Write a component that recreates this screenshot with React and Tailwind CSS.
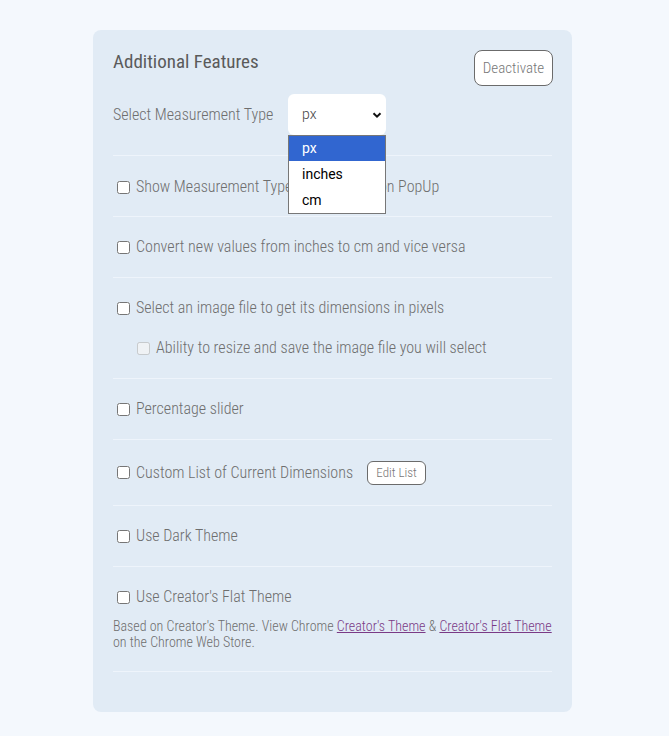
import React from "react";

function Check({ label, disabled = false, indent = false, children }) {
  return (
    <div className={"flex items-center h-5 " + (indent ? "pl-5" : "")}>
      <input
        type="checkbox"
        disabled={disabled}
        className="w-[13px] h-[13px] ml-1 mr-[6px] shrink-0"
      />
      <span className="text-[16px] leading-5 text-[#6e6e6e]">{label}</span>
      {children}
    </div>
  );
}

export default function App() {
  return (
    <div
      className="min-h-[736px] bg-[#f4f8fd] pt-[30px] pb-6 font-light font-stretch-condensed"
      style={{ fontFamily: "Roboto, 'Liberation Sans', sans-serif" }}
    >
      <div className="ml-[93px] w-[479px] rounded-lg bg-[#e1ebf5] px-5 pt-5 pb-10">
        <div className="flex items-start justify-between">
          <h2 className="text-[19px] leading-[22px] font-normal text-[#5a5a5a] mt-px">
            Additional Features
          </h2>
          <button className="h-9 w-[79px] -mr-px rounded-lg border border-[#6b6b6b] bg-white text-[15px] text-[#777]">
            Deactivate
          </button>
        </div>

        <div className="flex items-center mt-2 mb-5">
          <span className="text-[16px] text-[#6e6e6e] w-[175px]">Select Measurement Type</span>
          <div className="relative font-stretch-normal">
            <div className="w-[98px] h-[41px] rounded-md bg-white flex items-center justify-between pl-[14px] pr-[4px]">
              <span className="text-[14px] text-[#444]">px</span>
              <svg width="10" height="10" viewBox="0 0 10 10">
                <path d="M1.5 3.2 L5 6.7 L8.5 3.2" fill="none" stroke="#111" strokeWidth="2" />
              </svg>
            </div>
            <div className="absolute left-0 top-[41px] w-[98px] bg-white border border-[#777] z-10 font-normal text-[14px] text-black">
              <div className="h-[25px] bg-[#3166d0] text-white pl-[13px] flex items-center">px</div>
              <div className="h-[27px] pl-[13px] flex items-center">inches</div>
              <div className="h-[25px] pl-[13px] flex items-center">cm</div>
            </div>
          </div>
        </div>

        <div className="border-t border-[#eef4fb] pt-[21px] pb-[19px]">
          <Check label="Show Measurement Type in the Extension PopUp" />
        </div>
        <div className="border-t border-[#eef4fb] py-5">
          <Check label="Convert new values from inches to cm and vice versa" />
        </div>
        <div className="border-t border-[#eef4fb] py-5 flex flex-col gap-5">
          <Check label="Select an image file to get its dimensions in pixels" />
          <Check indent disabled label="Ability to resize and save the image file you will select" />
        </div>
        <div className="border-t border-[#eef4fb] py-5">
          <Check label="Percentage slider" />
        </div>
        <div className="border-t border-[#eef4fb] py-5">
          <div className="flex items-center h-[25px]">
            <input type="checkbox" className="w-[13px] h-[13px] ml-1 mr-[6px] shrink-0" />
            <span className="text-[16px] leading-5 text-[#6e6e6e]">Custom List of Current Dimensions</span>
            <button className="ml-[14px] h-6 w-[59px] rounded-md border border-[#6b6b6b] bg-white text-[13px] text-[#777]">
              Edit List
            </button>
          </div>
        </div>
        <div className="border-t border-[#eef4fb] py-5">
          <Check label="Use Dark Theme" />
        </div>
        <div className="border-t border-b border-[#eef4fb] pt-5 pb-[21px]">
          <Check label="Use Creator's Flat Theme" />
          <p className="mt-[11px] text-[14px] leading-4 text-[#6e6e6e]">
            Based on Creator's Theme. View Chrome{" "}
            <a href="#" className="underline text-[#7a3a86]">Creator's Theme</a> &amp;{" "}
            <a href="#" className="underline text-[#7a3a86]">Creator's Flat Theme</a>
            <br />
            on the Chrome Web Store.
          </p>
        </div>
      </div>
    </div>
  );
}
